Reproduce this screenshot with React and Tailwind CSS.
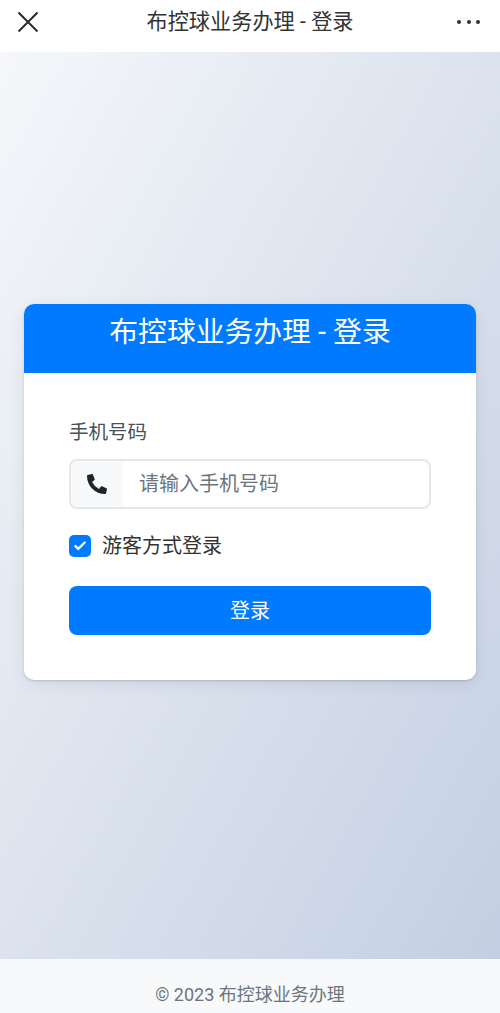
import { FaPhoneAlt } from 'react-icons/fa'
import { Check } from 'lucide-react'

const fontStack = "font-['Roboto','Noto_Sans_CJK_SC',sans-serif]"

export default function App() {
  return (
    <div className={`flex h-[1013px] w-full flex-col overflow-hidden ${fontStack}`}>
      {/* Top bar */}
      <header className="flex h-[52px] shrink-0 items-center bg-white pl-[17px] pr-[20px] pb-[8px]">
        <div className="flex-1">
          <svg width="22" height="22" viewBox="0 0 22 22" fill="none" stroke="#2b2b2b" strokeWidth="2">
            <path d="M1.5 1.5 20.5 20.5M20.5 1.5 1.5 20.5" />
          </svg>
        </div>
        <h1 className="ml-[3px] text-[21.2px] font-normal text-[#333]">布控球业务办理 - 登录</h1>
        <div className="flex flex-1 justify-end gap-[5.5px]">
          <span className="h-[4px] w-[4px] rounded-full bg-[#333]" />
          <span className="h-[4px] w-[4px] rounded-full bg-[#333]" />
          <span className="h-[4px] w-[4px] rounded-full bg-[#333]" />
        </div>
      </header>

      {/* Main */}
      <main className="flex flex-1 items-center justify-center bg-gradient-to-br from-[#f5f7fa] to-[#c3cfe2] px-[24px] pb-[27px]">
        <div className="w-full overflow-hidden rounded-[10px] bg-white shadow-[0_1px_2px_rgba(0,0,0,0.15),0_4px_16px_rgba(0,0,0,0.08)]">
          <div className="flex h-[69px] items-start justify-center bg-[#007bff] pt-[8px]">
            <h2 className="text-[28.8px] leading-[40px] font-normal text-white">布控球业务办理 - 登录</h2>
          </div>
          <div className="px-[45px] pt-[45px] pb-[45px]">
            <label className="block text-[19.5px] leading-[30px] text-[#495057]">手机号码</label>
            <div className="mt-[11px] flex h-[50px] overflow-hidden rounded-[8px] border-2 border-[#e4e7ea]">
              <div className="flex w-[52px] items-center justify-center bg-[#f8f9fa]">
                <FaPhoneAlt className="text-[20px] text-[#212529]" />
              </div>
              <div className="flex flex-1 items-center pl-[16px] text-[20px] text-[#6c757d]">请输入手机号码</div>
            </div>
            <div className="mt-[21px] flex h-[31px] items-center gap-[11px]">
              <span className="flex h-[22px] w-[22px] items-center justify-center rounded-[5px] bg-[#007bff]">
                <Check size={14} strokeWidth={4} color="white" />
              </span>
              <span className="text-[20px] text-[#333]">游客方式登录</span>
            </div>
            <button className="mt-[25px] block h-[49px] w-full rounded-[8px] bg-[#007bff] text-[20px] text-white">登录</button>
          </div>
        </div>
      </main>

      {/* Footer */}
      <footer className="flex h-[54px] shrink-0 items-center justify-center bg-[#f8f9fa] pt-[16px] text-[18px] text-[#6c757d]">
        © 2023 布控球业务办理
      </footer>
    </div>
  )
}
